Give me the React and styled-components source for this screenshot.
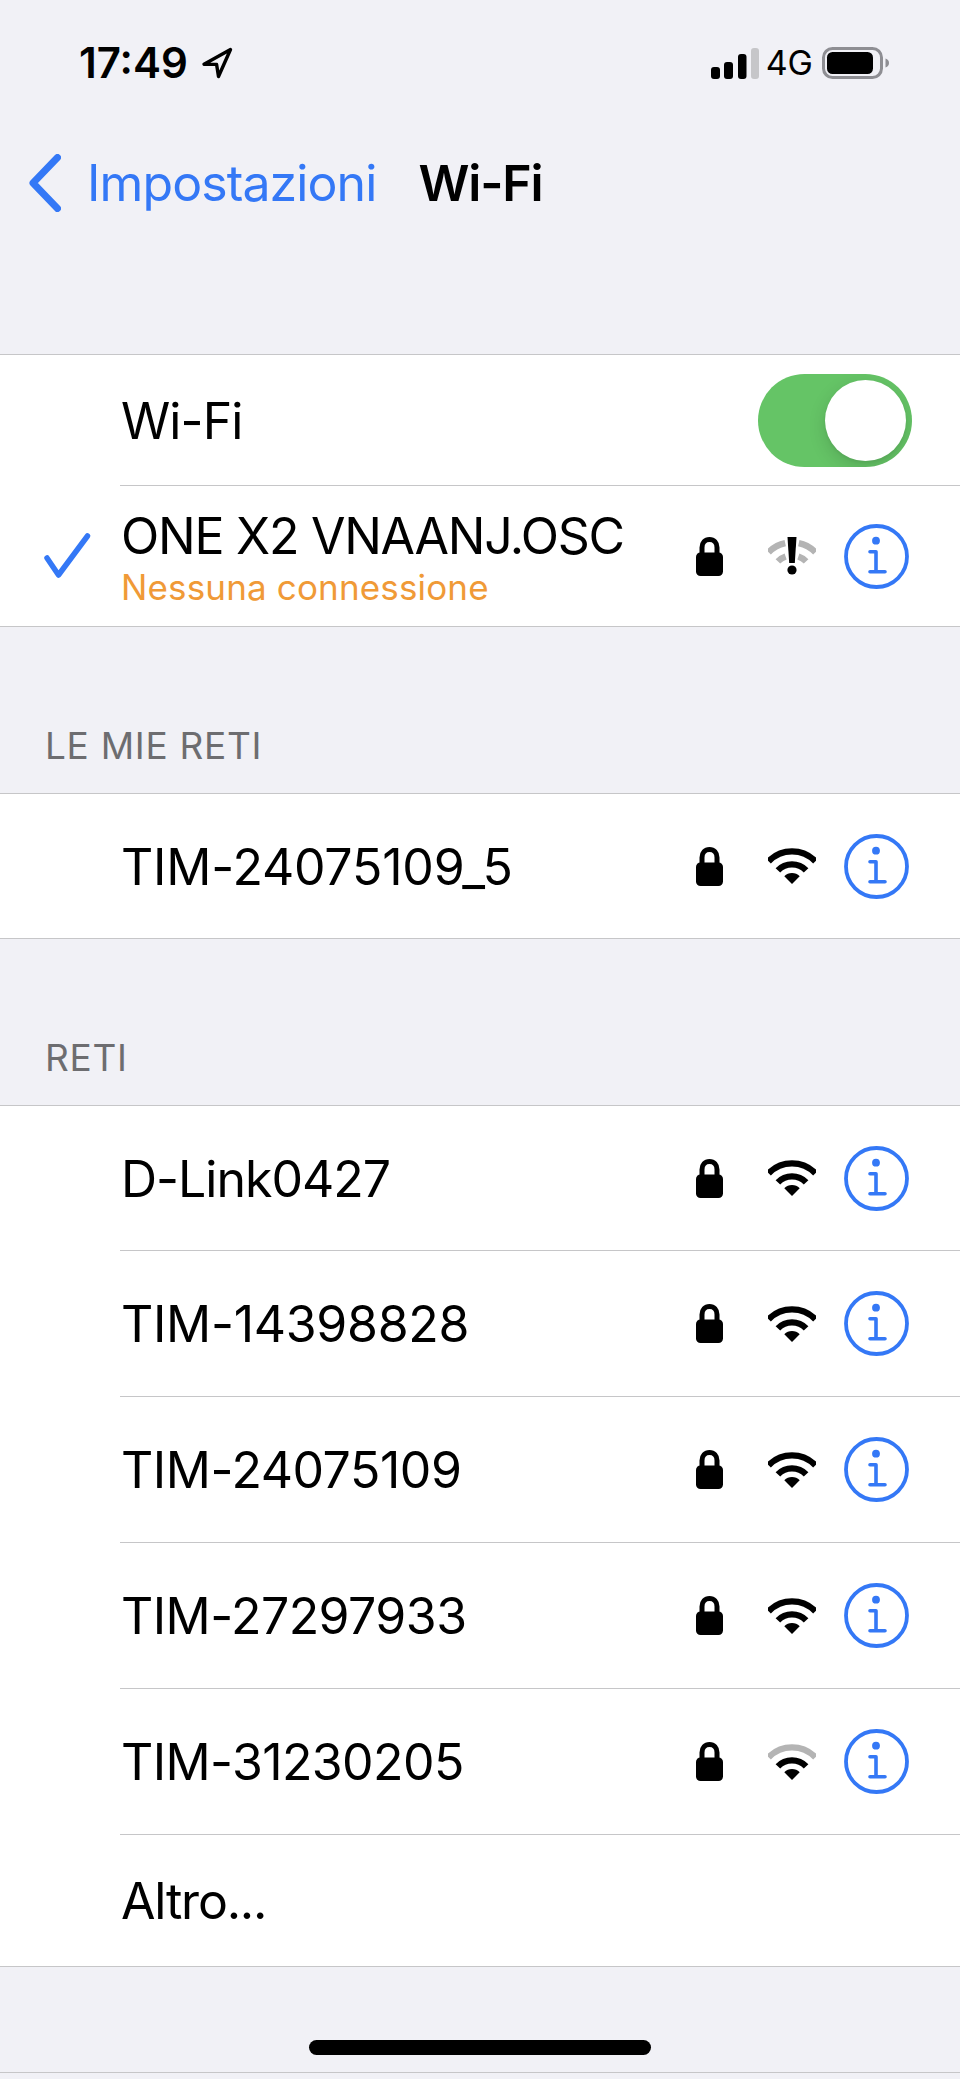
import React from "react";
import styled, { createGlobalStyle } from "styled-components";

const BLUE = "#3478f6";
const GlobalStyle = createGlobalStyle`
  html, body { margin: 0; padding: 0; background: #f1f1f6; }
  * { box-sizing: border-box; }
`;

const Page = styled.div`
  width: 960px; height: 2079px; background: #f1f1f6; overflow: hidden;
  font-family: Inter, "Liberation Sans", sans-serif; color: #000;
`;
const StatusBar = styled.div`
  height: 126px; display: flex; align-items: center; justify-content: space-between;
  padding: 0 71px 0 79px;
`;
const StatusLeft = styled.div`display: flex; align-items: center; gap: 13px;`;
const Time = styled.span`font-size: 42px; font-weight: 600; letter-spacing: 0; line-height: 1;`;
const StatusRight = styled.div`display: flex; align-items: center;`;
const Carrier = styled.span`font-size: 34px; font-weight: 400; line-height: 1; margin: 0 9px 0 7px;`;
const NavBar = styled.div`
  height: 114px; display: flex; align-items: center; padding-left: 29px;
`;
const BackLabel = styled.span`font-size: 50px; color: ${BLUE}; letter-spacing: -0.9px; margin-left: 26px; line-height: 1;`;
const NavTitle = styled.span`font-size: 50px; font-weight: 600; letter-spacing: -1.2px; margin-left: 42px; line-height: 1;`;
const Spacer = styled.div`height: ${p => p.$h}px;`;
const Group = styled.div`
  background: #fff; border-top: 1.5px solid #c6c6c8; border-bottom: 1.5px solid #c6c6c8;
`;
const Row = styled.div`display: flex; height: ${p => p.$h}px;`;
const Leading = styled.div`width: 120px; flex: none; display: flex; align-items: center; padding-left: 44px;`;
const RowBody = styled.div`
  flex: 1; display: flex; align-items: center; padding-right: 51px;
  border-bottom: ${p => (p.$last ? "none" : "1.5px solid #c6c6c8")};
`;
const Labels = styled.div`flex: 1; display: flex; flex-direction: column; padding: 1px 0 0 1px;`;
const Name = styled.div`font-size: 50px; letter-spacing: ${p => p.$ls}px; line-height: 62px;`;
const Sub = styled.div`font-size: 35px; color: #f09a37; line-height: 41px; letter-spacing: 0.15px;`;
const SectionLabel = styled.div`
  height: 166px; display: flex; align-items: flex-end; padding: 0 0 27px 45px;
  font-size: 37px; letter-spacing: 0.7px; color: #6d6d70; line-height: 40px;
`;
const Toggle = styled.div`
  width: 154px; height: 93px; border-radius: 47px; background: #65c466; display: flex;
  justify-content: flex-end; align-items: center; padding-right: 6px; margin-right: -3px;
  overflow: hidden;
`;
const Knob = styled.div`
  width: 81px; height: 81px; border-radius: 50%; background: #fff;
  box-shadow: 0 6px 18px rgba(0,0,0,.14), 0 2px 3px rgba(0,0,0,.05);
`;
const HomeArea = styled.div`
  height: 106px; border-bottom: 1.5px solid #c6c6c8; display: flex; justify-content: center;
  padding-top: 73px;
`;
const HomeBar = styled.div`width: 342px; height: 15px; border-radius: 8px; background: #000;`;
const IconSlot = styled.svg`display: block; flex: none; margin-right: ${p => p.$mr || 0}px;`;

const arc = (r, a0, a1, cx = 24, cy = 36) => {
  const t = a => ((a - 90) * Math.PI) / 180;
  const x = a => (cx + r * Math.cos(t(a))).toFixed(2);
  const y = a => (cy + r * Math.sin(t(a))).toFixed(2);
  return `M${x(a0)} ${y(a0)}A${r} ${r} 0 0 1 ${x(a1)} ${y(a1)}`;
};

const Chevron = () => (
  <IconSlot width="32" height="58" viewBox="0 0 32 58" fill="none">
    <path d="M28.5 3.500 4 29 28.500 54.500" stroke={BLUE} strokeWidth="7" strokeLinecap="round" strokeLinejoin="round" />
  </IconSlot>
);
const LocationArrow = () => (
  <IconSlot width="32" height="32" viewBox="0 0 32 32" fill="none">
    <path d="M29.500 2.500 3 17.200 15.600 17.400 17.500 29.500Z" stroke="#000" strokeWidth="3.400" strokeLinejoin="round" />
  </IconSlot>
);
const Signal = () => (
  <IconSlot width="48" height="31" viewBox="0 0 48 31">
    <rect x="0" y="19" width="9" height="12" rx="3" />
    <rect x="13" y="14" width="9" height="17" rx="3" />
    <rect x="27" y="6" width="8.500" height="25" rx="3" />
    <rect x="40" y="0" width="8" height="31" rx="3" fill="#c6c6c9" />
  </IconSlot>
);
const Battery = () => (
  <IconSlot width="67" height="32" viewBox="0 0 67 32">
    <rect x="1.500" y="1.500" width="58" height="29" rx="9" fill="none" stroke="#8e8e93" strokeWidth="3" />
    <rect x="5" y="5" width="46" height="22" rx="5.500" />
    <path d="M63.500 11.500c2.400.7 3.500 2.400 3.500 4.500s-1.100 3.800-3.500 4.500Z" fill="#8e8e93" />
  </IconSlot>
);
const Check = () => (
  <IconSlot width="47" height="46" viewBox="0 0 47 46" fill="none">
    <path d="M3 25 14.500 42 43.500 3" stroke={BLUE} strokeWidth="5.500" strokeLinecap="round" strokeLinejoin="round" />
  </IconSlot>
);
const Lock = () => (
  <IconSlot $mr={45} width="27" height="39" viewBox="0 0 27 39">
    <path d="M6 18V10.500C6 5.800 9 2.500 13.500 2.500S21 5.800 21 10.500V18" fill="none" stroke="#000" strokeWidth="5" />
    <rect x="0" y="15.500" width="27" height="23.500" rx="4.500" />
  </IconSlot>
);
const Wifi = ({ outer = "#000" }) => (
  <IconSlot $mr={28} width="48" height="36" viewBox="0 0 48 36" fill="none">
    <path d={arc(32.6, -46, 46)} stroke={outer} strokeWidth="6.4" />
    <path d={arc(19.6, -46, 46)} stroke="#000" strokeWidth="6.4" />
    <path d="M24 36 16.300 28.300A10.900 10.900 0 0 1 31.700 28.300Z" fill="#000" />
  </IconSlot>
);
const WifiAlert = () => (
  <IconSlot $mr={28} width="48" height="38" viewBox="0 0 48 38" fill="none">
    <path d={arc(32.6, -46, -12, 24, 38)} stroke="#b4b4b4" strokeWidth="6.4" />
    <path d={arc(32.6, 12, 46, 24, 38)} stroke="#b4b4b4" strokeWidth="6.4" />
    <path d={arc(19.6, -46, -19, 24, 38)} stroke="#b4b4b4" strokeWidth="6.4" />
    <path d={arc(19.6, 19, 46, 24, 38)} stroke="#b4b4b4" strokeWidth="6.4" />
    <path d="M19.500 0H28.500L26.800 26H21.200Z" fill="#000" />
    <circle cx="24" cy="33" r="4.600" fill="#000" />
  </IconSlot>
);
const Info = () => (
  <IconSlot width="65" height="65" viewBox="0 0 65 65" fill="none">
    <circle cx="32.500" cy="32.500" r="30.500" stroke={BLUE} strokeWidth="3.800" />
    <circle cx="32" cy="16.700" r="3.900" fill={BLUE} />
    <path d="M26 27.700H32V47.700M26 47.700H41" stroke={BLUE} strokeWidth="3.600" strokeLinecap="round" strokeLinejoin="round" />
  </IconSlot>
);

const NetworkRow = ({ h, name, ls = -0.2, sub, check, last, wifi }) => (
  <Row $h={h}>
    <Leading>{check && <Check />}</Leading>
    <RowBody $last={last}>
      <Labels>
        <Name $ls={ls}>{name}</Name>
        {sub && <Sub>{sub}</Sub>}
      </Labels>
      <Lock />
      {wifi}
      <Info />
    </RowBody>
  </Row>
);

export default function App() {
  return (
    <Page>
      <GlobalStyle />
      <StatusBar>
        <StatusLeft>
          <Time>17:49</Time>
          <LocationArrow />
        </StatusLeft>
        <StatusRight>
          <Signal />
          <Carrier>4G</Carrier>
          <Battery />
        </StatusRight>
      </StatusBar>
      <NavBar>
        <Chevron />
        <BackLabel>Impostazioni</BackLabel>
        <NavTitle>Wi-Fi</NavTitle>
      </NavBar>
      <Spacer $h={114} />
      <Group>
        <Row $h={131}>
          <Leading />
          <RowBody>
            <Labels><Name $ls={-0.9}>Wi-Fi</Name></Labels>
            <Toggle><Knob /></Toggle>
          </RowBody>
        </Row>
        <NetworkRow h={140} name="ONE X2 VNAANJ.OSC" ls={-1.25} sub="Nessuna connessione" check last wifi={<WifiAlert />} />
      </Group>
      <SectionLabel>LE MIE RETI</SectionLabel>
      <Group>
        <NetworkRow h={144} name="TIM-24075109_5" last wifi={<Wifi />} />
      </Group>
      <SectionLabel>RETI</SectionLabel>
      <Group>
        <NetworkRow h={145} name="D-Link0427" ls={-1} wifi={<Wifi />} />
        <NetworkRow h={146} name="TIM-14398828" ls={-0.3} wifi={<Wifi />} />
        <NetworkRow h={146} name="TIM-24075109" ls={-0.45} wifi={<Wifi />} />
        <NetworkRow h={146} name="TIM-27297933" ls={-0.55} wifi={<Wifi />} />
        <NetworkRow h={146} name="TIM-31230205" ls={-0.6} wifi={<Wifi outer="#b4b4b4" />} />
        <Row $h={131}>
          <Leading />
          <RowBody $last>
            <Labels><Name $ls={-1.2}>Altro...</Name></Labels>
          </RowBody>
        </Row>
      </Group>
      <HomeArea><HomeBar /></HomeArea>
    </Page>
  );
}
